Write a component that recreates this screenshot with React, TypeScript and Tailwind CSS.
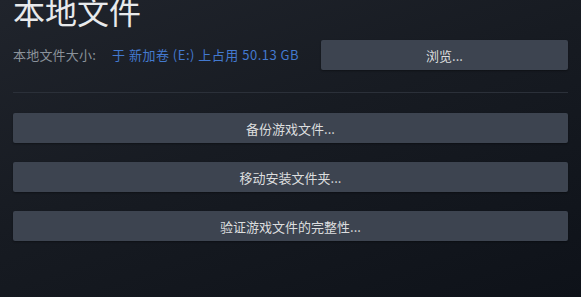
import React from "react";

const font = { fontFamily: '"Noto Sans CJK SC", "Noto Sans", sans-serif' };

function Btn({ label, className = "" }: { label: string; className?: string }) {
  return (
    <button
      className={`h-[30px] bg-[#3d4450] text-[#dcdedf] text-[13px] leading-none flex items-center justify-center rounded-[2px] shadow-[0_1px_2px_rgba(0,0,0,0.35)] ${className}`}
      style={font}
    >
      {label}
    </button>
  );
}

export default function App() {
  return (
    <div
      className="w-[581px] h-[297px] overflow-hidden bg-[linear-gradient(160deg,#20242c_0%,#171b22_45%,#0e1219_100%)]"
      style={font}
    >
      <div className="px-[13px] pt-[2px]">
        <div className="text-[32px] leading-[32px] text-[#e8eaec] -mt-[8px]">本地文件</div>
        <div className="mt-[14px] flex items-center h-[30px]">
          <div className="w-[99px] text-[13px] tracking-[0.2px] text-[#8b929a]">本地文件大小:</div>
          <div className="w-[209px] text-[13px] tracking-[0.5px] text-[#4379cf]">于 新加卷 (E:) 上占用 50.13 GB</div>
          <Btn label="浏览..." className="w-[247px]" />
        </div>
        <div className="mt-[22px] h-px bg-[#2b3039]" />
        <div className="mt-[20px] flex flex-col gap-[19px]">
          <Btn label="备份游戏文件..." className="w-full" />
          <Btn label="移动安装文件夹..." className="w-full" />
          <Btn label="验证游戏文件的完整性..." className="w-full" />
        </div>
      </div>
    </div>
  );
}
